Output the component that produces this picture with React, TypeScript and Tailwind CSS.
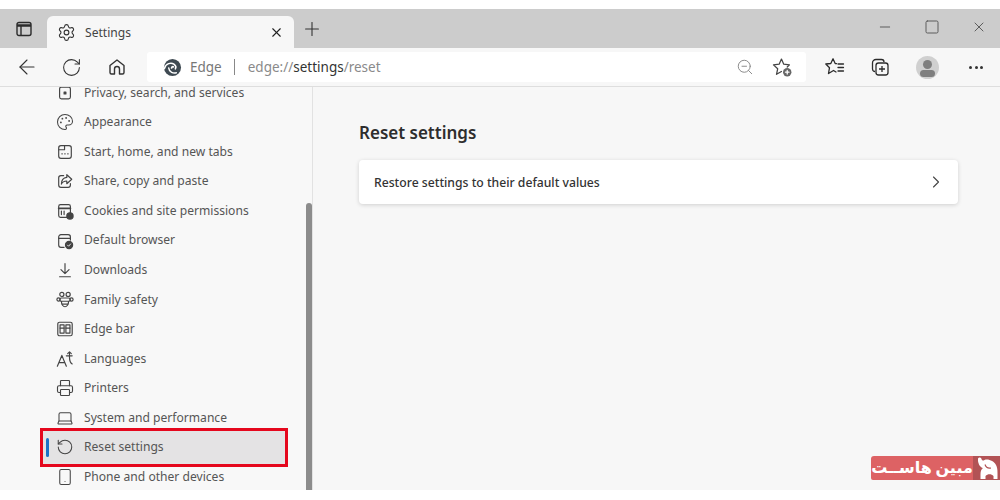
import { ArrowLeft, ChevronRight, Laptop, Minus, Palette, Plus, Printer, RotateCcw, RotateCw, Settings, Smartphone, Square, X, ZoomOut } from 'lucide-react';
import type { ReactNode } from 'react';

const ic = 'w-[18px] h-[18px] text-[#444444]';

function Svg({ children }: { children: ReactNode }) {
  return (
    <svg viewBox="0 0 20 20" fill="none" stroke="currentColor" strokeWidth="1.3" strokeLinecap="round" strokeLinejoin="round" className={ic}>
      {children}
    </svg>
  );
}

const rows: { label: string; icon: ReactNode; active?: boolean }[] = [
  { label: 'Privacy, search, and services', icon: <Svg><rect x="4" y="3.5" width="12" height="13" rx="2" /><rect x="9" y="9" width="2" height="2" fill="currentColor" /></Svg> },
  { label: 'Appearance', icon: <Palette className={ic} strokeWidth={1.4} /> },
  { label: 'Start, home, and new tabs', icon: <Svg><rect x="3" y="3" width="14" height="14" rx="2.5" /><path d="M3 7.5h6.5V3" /><path d="M6.5 12h.5M9.7 12h.5M13 12h.5" /></Svg> },
  { label: 'Share, copy and paste', icon: <Svg><path d="M8.5 4H5.5A2.5 2.5 0 0 0 3 6.5V14.500A2.500 2.500 0 0 0 5.500 17H13.500A2.500 2.500 0 0 0 16 14.500V13" /><path d="M12 3l5.500 5-5.500 5v-3c-3 0-5 1-6 3.500 0-4 2-7 6-7.500z" /></Svg> },
  { label: 'Cookies and site permissions', icon: <Svg><rect x="3" y="3" width="13" height="14" rx="2" /><path d="M3 7h13" strokeWidth="2" /><path d="M6 10v4M9 10v4" /><circle cx="15.500" cy="15.500" r="3.500" fill="currentColor" /></Svg> },
  { label: 'Default browser', icon: <Svg><path d="M9 17H5.500A2.500 2.500 0 0 1 3 14.500V5.500A2.500 2.500 0 0 1 5.500 3h8A2.500 2.500 0 0 1 16 5.500V9" /><path d="M3 7h13" /><circle cx="14.500" cy="14.500" r="4" fill="currentColor" /><path d="M12.800 14.600l1.200 1.200 2.200-2.500" stroke="#f8f8f8" strokeWidth="1" /></Svg> },
  { label: 'Downloads', icon: <Svg><path d="M10 3v11M5.500 9.500L10 14l4.500-4.500M4 17.500h12" /></Svg> },
  { label: 'Family safety', icon: <Svg><circle cx="6.500" cy="3.800" r="2.300" /><circle cx="13.500" cy="3.800" r="2.300" /><circle cx="2.800" cy="9.500" r="1.800" /><circle cx="17.200" cy="9.500" r="1.800" /><path d="M6 7.800h8a1.800 1.800 0 0 1 0 3.600H6a1.800 1.800 0 0 1 0-3.600zM6 11.500c0 3.500 2 6 4 6s4-2.500 4-6" /><path d="M7 14.500h6" /></Svg> },
  { label: 'Edge bar', icon: <Svg><rect x="2" y="2.500" width="16" height="15" rx="2" /><rect x="4.500" y="5.500" width="4.500" height="9" /><rect x="11" y="5.500" width="4.500" height="9" /><path d="M4.500 9h4.500M11 9h4.500" /></Svg> },
  { label: 'Languages', icon: <Svg><path d="M1.500 18L6.500 6l5 12M3.300 14h6.400" /><path d="M11.500 6.500h6.500M15 3v5c0 4 .5 6 3 7.500M13 4l2-2 2 2" /></Svg> },
  { label: 'Printers', icon: <Printer className={ic} strokeWidth={1.5} /> },
  { label: 'System and performance', icon: <Laptop className={ic} strokeWidth={1.4} /> },
  { label: 'Reset settings', icon: <RotateCcw className={ic} strokeWidth={1.4} />, active: true },
  { label: 'Phone and other devices', icon: <Smartphone className={ic} strokeWidth={1.4} /> },
];

function EdgeLogo() {
  return (
    <svg viewBox="0 0 20 20" className="w-[19px] h-[19px]" fill="none">
      <circle cx="10" cy="10" r="9" fill="#3f4a52" />
      <path d="M1.500 11C3 5.500 8.500 4.500 11.500 6.500 13.500 8 14 10 13 11.500" stroke="#ffffff" strokeWidth="1.600" strokeLinecap="round" />
      <path d="M6 10.500C6.500 15 11 16.500 14 15.500" stroke="#ffffff" strokeWidth="1.600" strokeLinecap="round" />
      <path d="M9 10.500c.3-1 1-1.500 2-1.200" stroke="#ffffff" strokeWidth="1.800" strokeLinecap="round" />
    </svg>
  );
}

function SidebarRow({ label, icon, active }: { label: string; icon: ReactNode; active?: boolean }) {
  return (
    <div className="relative h-[29.55px] shrink-0 flex items-center ml-[40px] w-[248px] pl-[16px]">
      {active && <span className="absolute inset-x-0 -top-[4.500px] h-[39px] border-[3px] border-[#e5071d] bg-[#e4e3e4]" />}
      {active && <span className="absolute left-[6px] top-[5.500px] h-[19px] w-[2.500px] rounded-full bg-[#1a73c8]" />}
      <span className="relative w-[28px] shrink-0 flex">{icon}</span>
      <span className="relative text-[12.1px] text-[#555555] whitespace-nowrap">{label}</span>
    </div>
  );
}

export default function App() {
  return (
    <div className="relative w-[1000px] h-[500px] flex flex-col overflow-hidden bg-white font-['Noto_Sans',sans-serif]">
      <div className="h-[9px] shrink-0" />

      <div className="h-[39px] shrink-0 flex items-end bg-[#cccccc]">
        <div className="w-[47px] h-full flex items-center justify-center">
          <svg viewBox="0 0 16 16" className="w-[16px] h-[16px] text-[#2b2b2b]" fill="none" stroke="currentColor" strokeWidth="1.400">
            <rect x="1" y="1.500" width="14" height="13" rx="2" />
            <path d="M1 4.500h14" strokeWidth="2.500" />
            <path d="M5 4.500v10" />
          </svg>
        </div>
        <div className="w-[247px] h-[32px] flex items-center pl-[10px] pr-[10px] rounded-t-[6px] bg-[#f7f7f7]">
          <Settings className="w-[19px] h-[19px] text-[#333333]" strokeWidth={1.400} />
          <span className="ml-[9px] flex-1 text-[12.1px] pt-[2px] text-[#444444]">Settings</span>
          <X className="w-[15px] h-[15px] text-[#222222]" strokeWidth={1.800} />
        </div>
        <div className="w-[36px] h-full flex items-center justify-center">
          <Plus className="w-[22px] h-[22px] text-[#333333]" strokeWidth={1.200} />
        </div>
        <div className="flex-1 h-full flex items-start justify-end pt-[10px] pr-[13px] gap-[31px] text-[#5c5c5c]">
          <Minus className="w-[16px] h-[16px]" strokeWidth={1.500} />
          <Square className="w-[16px] h-[16px]" strokeWidth={1.500} />
          <X className="w-[16px] h-[16px]" strokeWidth={1.500} />
        </div>
      </div>

      <div className="h-[39px] shrink-0 flex items-center bg-[#f7f7f7] border-b border-[#dedede]">
        <div className="w-[147px] flex items-center pl-[15px] text-[#333333]">
          <ArrowLeft className="w-[24px] h-[24px]" strokeWidth={1.100} />
          <RotateCw className="ml-[22px] w-[21px] h-[21px]" strokeWidth={1.200} />
          <svg viewBox="0 0 20 20" className="ml-[25px] w-[20px] h-[20px]" fill="none" stroke="currentColor" strokeWidth="1.400" strokeLinejoin="round">
            <path d="M3 8.500L10 3l7 5.500V15.500A1.500 1.500 0 0 1 15.500 17H12.500V12a2.500 2.500 0 0 0-5 0v5H4.500A1.500 1.500 0 0 1 3 15.500z" />
          </svg>
        </div>
        <div className="w-[659px] h-[30px] flex items-center pl-[16px] pr-[13px] rounded-[3px] bg-white">
          <EdgeLogo />
          <span className="ml-[8px] pt-[1px] text-[13.500px] text-[#777777]">Edge</span>
          <span className="w-px h-[16px] ml-[12px] mr-[13px] bg-[#888888]" />
          <span className="flex-1 pt-[1px] text-[13.500px] text-[#8a8a8a]">
            edge://<span className="text-[#333333]">settings</span>/reset
          </span>
          <ZoomOut className="w-[18px] h-[18px] mr-[18px] text-[#8a8a8a]" strokeWidth={1.300} />
          <svg viewBox="0 0 20 20" className="w-[21px] h-[21px] text-[#444444]" fill="none" stroke="currentColor" strokeWidth="1.200" strokeLinejoin="round" strokeLinecap="round">
            <path d="M14.500 9.500L16.600 7.500 11.200 6.900 9 2 6.800 6.900 1.400 7.500 5.400 11.200 4.300 16.500 9 13.800" />
            <circle cx="14.500" cy="14.500" r="4" fill="#666666" stroke="none" />
            <path d="M12.800 14.500h3.400M14.500 12.800v3.400" stroke="#ffffff" />
          </svg>
        </div>
        <div className="flex-1 flex items-center pl-[19px] text-[#2b2b2b]">
          <svg viewBox="0 0 20 20" className="w-[20px] h-[20px]" fill="none" stroke="currentColor" strokeWidth="1.300" strokeLinejoin="round" strokeLinecap="round">
            <path d="M11.500 6.700L10.200 6.500 8 1.800 5.800 6.500 .8 7 4.500 10.700 3.500 16.500 8.500 13.500 11 15" />
            <path d="M13 7h5.500M13 10.500h5.500M13 14h5.500" />
          </svg>
          <svg viewBox="0 0 20 20" className="ml-[25px] w-[20px] h-[20px]" fill="none" stroke="currentColor" strokeWidth="1.300" strokeLinejoin="round">
            <path d="M5 14.500A2.500 2.500 0 0 1 2.500 12V6A3.500 3.500 0 0 1 6 2.500h5.500A2.500 2.500 0 0 1 14 5" />
            <rect x="6" y="6" width="12" height="12" rx="2.500" />
            <path d="M12 9v6M9 12h6" />
          </svg>
          <span className="relative ml-[26px] w-[23px] h-[23px] rounded-full overflow-hidden bg-[#d0d0d0]">
            <span className="absolute left-[7px] top-[4px] w-[9px] h-[9px] rounded-full bg-[#7f7f7f]" />
            <span className="absolute left-[4px] top-[14px] w-[15px] h-[7px] rounded-full bg-[#7f7f7f]" />
          </span>
          <span className="flex gap-[2.500px] ml-[30px]">
            <span className="w-[3px] h-[3px] rounded-full bg-[#333333]" />
            <span className="w-[3px] h-[3px] rounded-full bg-[#333333]" />
            <span className="w-[3px] h-[3px] rounded-full bg-[#333333]" />
          </span>
        </div>
      </div>

      <div className="h-[403px] shrink-0 flex bg-[#f7f7f7]">
        <div className="relative w-[313px] shrink-0 overflow-hidden border-r border-[#e2e2e2] bg-[#f8f8f8]">
          <div className="flex flex-col -mt-[9px]">
            {rows.map((r) => (
              <SidebarRow key={r.label} {...r} />
            ))}
          </div>
          <div className="absolute right-0 top-[116px] bottom-0 w-[6px] rounded-t-[3px] bg-[#8c8c8c]" />
        </div>

        <div className="flex-1 pl-[46px] pr-[42px] pt-[33px]">
          <h1 className="text-[17px] leading-[26px] font-semibold text-[#2e2e2e]">Reset settings</h1>
          <div className="mt-[14px] h-[44px] flex items-center justify-between pl-[15px] pr-[12px] rounded-[4px] bg-white shadow-[0_1px_4px_rgba(0,0,0,0.16)]">
            <span className="text-[12.2px] pt-[2px] font-medium text-[#333333]">Restore settings to their default values</span>
            <ChevronRight className="w-[20px] h-[20px] text-[#444444]" strokeWidth={1.300} />
          </div>
        </div>
      </div>

      <div className="absolute left-[871px] top-[456px] w-[129px] h-[24px] flex overflow-hidden rounded-tl-[3px] rounded-bl-[2px] bg-[#dd6264]">
        <span dir="rtl" className="flex-1 text-center text-[16px] leading-[24px] font-bold text-white font-['DejaVu_Sans',sans-serif] whitespace-nowrap [word-spacing:-2px]">مبین هاســت</span>
        <span className="w-[27px] flex items-center justify-center bg-[#b25355]">
          <svg viewBox="0 0 24 24" className="w-[24px] h-[24px]" fill="#ffffff">
            <path d="M3 2.500C4 1 6 1.500 6.500 3 7 4.500 8 5 9.500 4 13 2.500 19 5 21 9c1 2 1.500 4 1.500 8v6H18.500V20c-2-2.500-6-2.500-8 0v3H5.500V18C5.500 15 6.500 13 8 12 5 11.500 3.500 8 3 5z" />
            <path d="M10 8.500c1 3 3.500 4 6 3.500" fill="none" stroke="#b25355" strokeWidth="1.200" />
          </svg>
        </span>
      </div>
    </div>
  );
}
